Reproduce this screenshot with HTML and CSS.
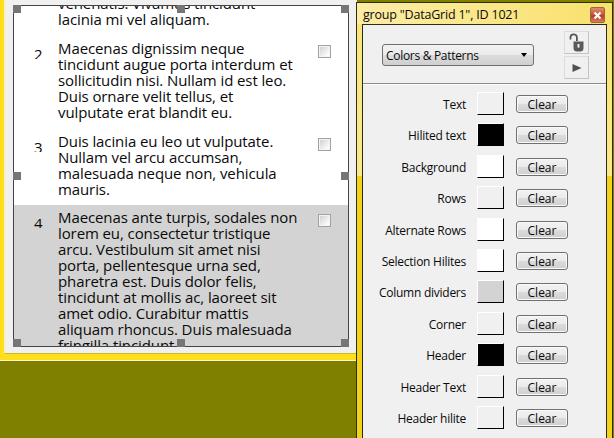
FILE: index.html
```html
<!DOCTYPE html>
<html lang="en">
<head>
<meta charset="utf-8">
<title>DataGrid inspector</title>
<link rel="stylesheet" href="styles.css">
</head>
<body>
<section class="win win-left">
  <div class="client">
  <div class="grid">
    <span class="handle h-tl"></span><span class="handle h-tc"></span><span class="handle h-tr"></span>
    <span class="handle h-ml"></span><span class="handle h-mr"></span>
    <span class="handle h-bl"></span><span class="handle h-bc"></span><span class="handle h-br"></span>
    <div class="viewport">
    <div class="rows">
      <div class="row row-first">
        <div class="num"></div>
        <p class="copy">venenatis. Vivamus tincidunt<br>lacinia mi vel aliquam.</p>
      </div>
      <div class="row row-2">
        <div class="num">2</div>
        <p class="copy">Maecenas dignissim neque<br>tincidunt augue porta interdum et<br>sollicitudin nisi. Nullam id est leo.<br>Duis ornare velit tellus, et<br>vulputate erat blandit eu.</p>
        <span class="check"></span>
      </div>
      <div class="row row-3">
        <div class="num">3</div>
        <p class="copy">Duis lacinia eu leo ut vulputate.<br>Nullam vel arcu accumsan,<br>malesuada neque non, vehicula<br>mauris.</p>
        <span class="check"></span>
      </div>
      <div class="row row-sel">
        <div class="num">4</div>
        <p class="copy">Maecenas ante turpis, sodales non<br>lorem eu, consectetur tristique<br>arcu. Vestibulum sit amet nisi<br>porta, pellentesque urna sed,<br>pharetra est. Duis dolor felis,<br>tincidunt at mollis ac, laoreet sit<br>amet odio. Curabitur mattis<br>aliquam rhoncus. Duis malesuada<br>fringilla tincidunt.</p>
        <span class="check"></span>
      </div>
    </div>
    </div>
  </div>
  </div>
</section>

<section class="win win-right">
  <header class="titlebar">
    <span class="title">group "DataGrid 1", ID 1021</span>
    <span class="close"><svg width="9" height="9" viewBox="0 0 9 9"><path d="M1.5 1.5 7.5 7.5M7.5 1.5 1.5 7.5" stroke="#fff" stroke-width="2.2" fill="none"/></svg></span>
  </header>
  <div class="panel">
    <div class="toolbar">
      <div class="select"><span>Colors &amp; Patterns</span><i class="caret"></i></div>
      <div class="tools">
        <span class="tool"><svg width="17" height="20" viewBox="0 0 17 20"><path d="M2.5 6.5V4.5a3.2 3.2 0 0 1 6.4 0V8" fill="none" stroke="#555" stroke-width="1.8"/><path d="M5.5 8.5h10v6.5a3.5 3.5 0 0 1-3.5 3.5H9a3.5 3.5 0 0 1-3.5-3.5z" fill="#5a5a5a"/><rect x="9.5" y="11" width="2" height="3.6" fill="#eee"/></svg></span>
        <span class="tool"><svg width="10" height="10" viewBox="0 0 10 10"><path d="M0.5 1 9.5 5 0.5 9z" fill="#505050"/></svg></span>
      </div>
    </div>
    <div class="props">
      <div class="prop"><span class="label">Text</span><span class="swatch"></span><span class="btn">Clear</span></div>
      <div class="prop"><span class="label">Hilited text</span><span class="swatch sw-black"></span><span class="btn">Clear</span></div>
      <div class="prop"><span class="label">Background</span><span class="swatch sw-white"></span><span class="btn">Clear</span></div>
      <div class="prop"><span class="label">Rows</span><span class="swatch"></span><span class="btn">Clear</span></div>
      <div class="prop"><span class="label">Alternate Rows</span><span class="swatch sw-white"></span><span class="btn">Clear</span></div>
      <div class="prop"><span class="label">Selection Hilites</span><span class="swatch sw-white"></span><span class="btn">Clear</span></div>
      <div class="prop"><span class="label">Column dividers</span><span class="swatch sw-grey"></span><span class="btn">Clear</span></div>
      <div class="prop"><span class="label">Corner</span><span class="swatch"></span><span class="btn">Clear</span></div>
      <div class="prop"><span class="label">Header</span><span class="swatch sw-black"></span><span class="btn">Clear</span></div>
      <div class="prop"><span class="label">Header Text</span><span class="swatch"></span><span class="btn">Clear</span></div>
      <div class="prop"><span class="label">Header hilite</span><span class="swatch"></span><span class="btn">Clear</span></div>
    </div>
  </div>
</section>
</body>
</html>
```
FILE: styles.css
```css
* { box-sizing: border-box; }
html, body { margin: 0; height: 100%; }
body {
  position: relative;
  overflow: hidden;
  background: #808000;
  font-family: "Open Sans", "Noto Sans", sans-serif;
  color: #0a0a0a;
}
.win { position: absolute; }

/* left window */
.win-left {
  left: 0;
  top: -10px;
  width: 357px;
  height: 371px;
  background: #ffdf1c;
  border-bottom: 1px solid #fbf7d0;
  padding: 0 0 6px 4px;
}
.client {
  height: 100%;
  background: #f0f0f0;
  border-left: 1px solid #fdf4a0;
  border-bottom: 1px solid #c8b830;
  padding: 15px 0 0 8px;
}
.grid {
  position: relative;
  width: 336px;
  height: 342px;
  border: 1px solid #444;
  background: #fff;
}
.viewport {
  height: 100%;
  overflow: hidden;
}
.handle {
  position: absolute;
  width: 8px;
  height: 8px;
  background: #767676;
  z-index: 2;
}
.h-tl { left: -1px; top: -1px; }
.h-tc { left: 163px; top: -1px; }
.h-tr { right: -1px; top: -1px; }
.h-ml { left: -1px; top: 166px; }
.h-mr { right: -1px; top: 166px; }
.h-bl { left: -1px; bottom: -1px; }
.h-bc { left: 163px; bottom: -1px; }
.h-br { right: -1px; bottom: -1px; }
.rows { margin-top: -11px; }
.row {
  display: flex;
  align-items: flex-start;
  padding: 4px 0 9px 20px;
}
.row-first { padding-top: 0; height: 41px; }
.row-2 { height: 93px; }
.row-3 { height: 76px; }
.row-sel { background: #d3d3d3; }
.num {
  width: 24px;
  height: 13px;
  margin-top: 6px;
  overflow: hidden;
  font-size: 15px;
  line-height: 16px;
  flex: none;
}
.copy {
  margin: 0;
  width: 260px;
  flex: none;
  font-size: 15px;
  line-height: 16px;
  white-space: nowrap;
  letter-spacing: -0.1px;
}
.check {
  width: 13px;
  height: 13px;
  margin-top: 5px;
  border: 1px solid #a2a2a2;
  background: linear-gradient(135deg, #c8ccd2, #fff 85%);
  box-shadow: inset 0 0 0 1px #f4f4f4;
  flex: none;
}

/* right window */
.win-right {
  left: 356px;
  top: 2px;
  width: 257px;
  height: 450px;
  border: 1px solid #2c2c10;
  background: linear-gradient(#f9e478 0, #fae88c 173px, #f3d21c 173px, #f3d21c 100%);
  padding: 0 5px;
}
.titlebar {
  height: 21px;
  position: relative;
  background: linear-gradient(100deg, #fceca6, #f9e16c);
  margin: 0 -5px;
  padding: 0 6px;
}
.title {
  display: block;
  font-size: 12.5px;
  line-height: 18px;
  padding-top: 3px;
  letter-spacing: -0.2px;
  white-space: nowrap;
}
.close {
  position: absolute;
  top: 4px;
  right: 7px;
  width: 15px;
  height: 16px;
  border: 1px solid #9a6a3a;
  border-radius: 2px;
  background: linear-gradient(#e08a70, #c8503a 50%, #b83a24 55%, #dc7a60);
  display: flex;
  align-items: center;
  justify-content: center;
}
.panel {
  height: 420px;
  border: 1px solid #2c2c10;
  background: #f0f0f0;
}
.toolbar {
  height: 59px;
  display: flex;
  justify-content: space-between;
  padding: 6px 17px 0 19px;
  border-bottom: 1px solid #8a8a8a;
  box-shadow: 0 1px 0 #fff;
}
.select {
  width: 152px;
  height: 22px;
  margin-top: 13px;
  border: 1px solid #707070;
  border-radius: 3px;
  background: linear-gradient(#f2f2f2, #ebebeb 48%, #dcdcdc 50%, #cfcfcf);
  display: flex;
  align-items: center;
  justify-content: space-between;
  padding: 0 6px 0 3px;
  font-size: 12px;
  letter-spacing: -0.3px;
}
.caret {
  width: 0;
  height: 0;
  border-style: solid;
  border-width: 4px 3.5px 0;
  border-color: #000 transparent transparent;
}
.tools { display: flex; flex-direction: column; gap: 2px; }
.tool {
  width: 25px;
  height: 23px;
  border: 1px solid #dcdcdc;
  border-bottom-color: #c4c4c4;
  border-right-color: #c4c4c4;
  display: flex;
  align-items: center;
  justify-content: center;
}
.props {
  display: grid;
  grid-auto-rows: 31.4px;
  padding-top: 8px;
}
.prop {
  display: grid;
  grid-template-columns: 103px 27px 52px;
  align-items: start;
  height: 23px;
  font-size: 12px;
}
.label {
  text-align: right;
  line-height: 25px;
  letter-spacing: -0.25px;
  white-space: nowrap;
}
.swatch {
  display: block;
  margin-left: 11px;
  width: 27px;
  height: 23px;
  background: #f0f0f0;
  border: 1px solid;
  border-color: #fff #000 #000 #fff;
}
.sw-black { background: #000; }
.sw-white { background: #fff; }
.sw-grey { background: #d3d3d3; }
.btn {
  display: block;
  margin: 3px 0 0 23px;
  width: 52px;
  height: 18px;
  border: 1px solid #707070;
  border-radius: 3px;
  background: linear-gradient(#f2f2f2, #ebebeb 48%, #dcdcdc 50%, #cfcfcf);
  box-shadow: inset 0 0 0 1px #fafafa;
  text-align: center;
  line-height: 17px;
  font-size: 12px;
}
```
